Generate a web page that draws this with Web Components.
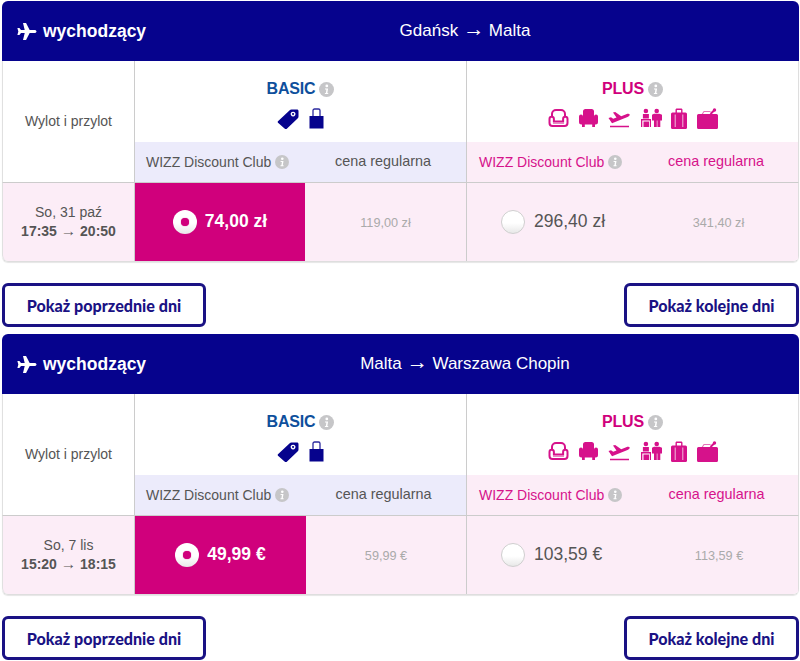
<!DOCTYPE html>
<html lang="pl">
<head>
<meta charset="utf-8">
<title>Wizz</title>
<style>
html,body{margin:0;padding:0;background:#fff;}
body{padding:1px 1px 0 2px;font-family:"Liberation Sans",Arial,sans-serif;}
</style>
</head>
<body>
<flight-section route="Gdańsk → Malta" date="So, 31 paź" time="17:35 → 20:50" basic-price="74,00 zł" basic-regular="119,00 zł" plus-price="296,40 zł" plus-regular="341,40 zł" split="170"></flight-section>
<flight-section route="Malta → Warszawa Chopin" date="So, 7 lis" time="15:20 → 18:15" basic-price="49,99 €" basic-regular="59,99 €" plus-price="103,59 €" plus-regular="113,59 €" split="171"></flight-section>

<script>
class infoIcon extends HTMLElement {
   constructor() {
      super();
      this.attachShadow({mode: 'open'});
      const size = this.getAttribute('size') || 14;
      this.shadowRoot.innerHTML = `
      <style>
         :host{display:inline-flex;width:${size}px;height:${size}px;}
         svg{display:block;}
      </style>
      <svg width="${size}" height="${size}" viewBox="0 0 14 14">
         <circle cx="7" cy="7" r="7" fill="#c6c6c8"/>
         <circle cx="7.300" cy="3.700" r="1.300" fill="#fff"/>
         <path d="M5.600 6h2.900l-.7 4.200h.8v1H5.500v-1h.9l.5-3.200H5.600z" fill="#fff"/>
      </svg>`;
   }
}
customElements.define('info-icon', infoIcon);

class fareRadio extends HTMLElement {
   constructor() {
      super();
      this.attachShadow({mode: 'open'});
      const checked = this.hasAttribute('checked');
      this.shadowRoot.innerHTML = `
      <style>
         :host{display:block;width:24px;height:24px;flex:none;}
         .r{box-sizing:border-box;width:24px;height:24px;border-radius:50%;display:flex;align-items:center;justify-content:center;
            background:linear-gradient(#fff 55%,#e8e8e8);border:${checked ? '0' : '1px solid #cfcfcf'};}
         i{width:8px;height:8px;border-radius:50%;background:#d0007c;box-shadow:0 0 1px #d0007c;display:${checked ? 'block' : 'none'};}
      </style>
      <div class="r"><i></i></div>`;
   }
}
customElements.define('fare-radio', fareRadio);

class wizzButton extends HTMLElement {
   constructor() {
      super();
      this.attachShadow({mode: 'open'});
      this.shadowRoot.innerHTML = `
      <style>
         :host{display:block;}
         button{box-sizing:border-box;display:block;height:44px;width:100%;padding:0;background:#fff;border:3px solid #1a1284;border-radius:6px;
            color:#1a1284;font:900 16.100px Lato,"Liberation Sans",sans-serif;}
      </style>
      <button><slot></slot></button>`;
   }
}
customElements.define('wizz-button', wizzButton);

class basicIcons extends HTMLElement {
   constructor() {
      super();
      this.attachShadow({mode: 'open'});
      this.shadowRoot.innerHTML = `
      <style>
         :host{display:flex;gap:10px;height:22px;color:#06038d;}
         svg{display:block;fill:currentColor;}
      </style>
      <svg width="22" height="21" viewBox="0 0 23 22"><path fill-rule="evenodd" d="M1 14 13 2.500c.6-.6 1.300-1 2.200-1H21c.8 0 1.500.7 1.500 1.500v5.800c0 .9-.4 1.600-1 2.200L10 22c-.5.300-1 .3-1.500 0L1 15.500c-.4-.4-.4-1 0-1.500zM16.800 3.800a2.500 2.500 0 1 0 .01 0zm0 1.500a1 1 0 1 1-.01 0z"/></svg>
      <svg width="15" height="21" viewBox="0 0 15 21"><path d="M.5 8h14v12.500H.5z"/><path d="M4 9V2.500A1.500 1.500 0 0 1 5.500 1h4A1.500 1.500 0 0 1 11 2.500V9" fill="none" stroke="currentColor" stroke-width="1.300" opacity=".85"/></svg>`;
   }
}
customElements.define('basic-icons', basicIcons);

class plusIcons extends HTMLElement {
   constructor() {
      super();
      this.attachShadow({mode: 'open'});
      this.shadowRoot.innerHTML = `
      <style>
         :host{display:flex;gap:10px;height:22px;color:#d6128b;}
         svg{display:block;fill:currentColor;}
         .o{fill:none;stroke:currentColor;stroke-width:2;}
         .people{margin:0 -1px 0 1px;}
      </style>
      <svg width="21" height="21" viewBox="0 0 21 21"><path class="o" d="M4 8V6a4 4 0 0 1 4-4h5a4 4 0 0 1 4 4v2"/><path class="o" d="M1.500 11a2.200 2.200 0 0 1 4.400 0v2.500h9.200V11a2.200 2.200 0 0 1 4.400 0v4a3 3 0 0 1-3 3h-12a3 3 0 0 1-3-3z"/><path d="M5 14.800h11v1.300H5z" opacity=".5"/></svg>
      <svg width="19" height="21" viewBox="0 0 19 21"><path d="M4 3.500A2.500 2.500 0 0 1 6.500 1h6A2.500 2.500 0 0 1 15 3.500V11H4z"/><path d="M0 8.500a2 2 0 0 1 4 0V11h11V8.500a2 2 0 0 1 4 0V14a2.500 2.500 0 0 1-2.500 2.500H16V19h-2.800v-2.500H5.800V19H3v-2.500h-.5A2.500 2.500 0 0 1 0 14z"/></svg>
      <svg width="22" height="21" viewBox="0 0 22 21"><path d="M.5 10 3 9.300l2.200 1.500L8.500 9.500 5 4.500l2.200-.6 6 4.400 5-2c1.500-.6 3.200-.6 3.500.2.300.8-.8 1.800-2.200 2.400L4 15.300z"/><path d="M2 17.800h19v1.500H2z"/></svg>
      <svg class="people" width="21" height="21" viewBox="0 1 21 21"><circle cx="4.900" cy="4" r="2.300"/><circle cx="15.700" cy="4" r="2.300"/><path d="M1.900 7h6v4.500h-6z"/><path d="M0 12h10v8H8.800v-6.500H1.300V20H0z"/><path d="M2.500 14.500h5.500V20H2.500z"/><path d="M13 6.700h5.500l2.500 1v5.800h-1.700V20h-2.900v-6.500h-.6V20h-2.800v-6.500H11V7.700z"/></svg>
      <svg width="16" height="21" viewBox="0 0 16 21"><path d="M4.500 5V2c0-.8.600-1.400 1.400-1.400h4.200c.8 0 1.400.6 1.400 1.400v3H10.100V2H5.900v3z"/><rect y="4.500" width="16" height="16.500" rx="1.500"/><path d="M3.600 6.500h1.300V19H3.600zM11.100 6.500h1.300V19h-1.300z" fill="#fff" opacity=".55"/></svg>
      <svg width="21" height="21" viewBox="0 0 21 21"><path d="M1.500 6h18A1.500 1.500 0 0 1 21 7.500V19.500a1.500 1.500 0 0 1-1.500 1.500h-18A1.500 1.500 0 0 1 0 19.500V7.500A1.500 1.500 0 0 1 1.500 6z"/><path d="M5 6.500 7 3.500h6.500" fill="none" stroke="currentColor" stroke-width="1.100" opacity=".6"/><path class="o" d="M13.500 6 17 2.500"/><circle cx="17.500" cy="2" r="1.700"/></svg>`;
   }
}
customElements.define('plus-icons', plusIcons);

class flightSection extends HTMLElement {
   constructor() {
      super();
      this.attachShadow({mode: 'open'});
   }
   connectedCallback() {
      this.render();
   }
   arrow(text) {
      return text.replace('→', '<span class="ar">→</span>');
   }
   getStyles() {
      const split = this.getAttribute('split');
      return `
      <style>
         :host{display:block;color:#555;font-family:"Liberation Sans",Arial,sans-serif;font-size:14px;}
         .ar{line-height:0;}
         .head{height:60px;background:#06038d;border-radius:6px 6px 0 0;color:#fff;display:grid;grid-template-columns:133px 1fr;align-items:center;}
         .title{display:flex;align-items:center;gap:6px;padding-left:15px;font-weight:bold;font-size:17.500px;white-space:nowrap;}
         .title svg{display:block;flex:none;}
         .route{font-size:17px;text-align:center;margin-left:-4px;white-space:nowrap;}
         .route .ar{font-size:1.250em;}
         .table{display:grid;grid-template-columns:133px 332px 332px;grid-template-rows:81px 41px 78px;
            border-bottom:1px solid #dedede;border-radius:0 0 6px 6px;box-shadow:0 1px 1px #e6e6e6;overflow:hidden;}
         .table>*{box-sizing:border-box;}
         .label{grid-row:1/3;border-left:1px solid #e0e0e0;border-right:1px solid #ccc;border-bottom:1px solid #ccc;
            display:flex;align-items:center;justify-content:center;font-size:14px;padding-bottom:2px;background:#fff;}
         .fare{display:flex;flex-direction:column;align-items:center;padding-top:18px;gap:9px;}
         .fare.plus{border-right:1px solid #dedede;}
         .fare.basic{border-right:1px solid #ccc;}
         .name{display:flex;align-items:center;gap:4px;font-size:16px;font-weight:bold;height:20px;letter-spacing:-.2px;}
         .basic .name{color:#0e4f9c;}
         .plus .name{color:#d0007c;}
         .sub{display:grid;align-items:center;border-bottom:1px solid #ccc;}
         .sub.b{background:#ecebfb;border-right:1px solid #ccc;grid-template-columns:${split}px 1fr;}
         .sub.p{background:#fcedf7;color:#d6128b;border-right:1px solid #dedede;grid-template-columns:${split - 1}px 1fr;}
         .dc{display:flex;align-items:center;gap:4px;padding-left:11px;white-space:nowrap;}
         .dc.pp{padding-left:12px;}
         .reg{text-align:center;padding-bottom:2px;font-size:14.400px;}
         .sub.b .reg{padding-right:5px;}
         .sub.p .reg{padding-right:2px;}
         .when{background:#fcedf7;border-left:1px solid #e0e0e0;border-right:1px solid #ccc;display:flex;flex-direction:column;align-items:center;justify-content:center;line-height:19px;border-bottom-left-radius:6px;}
         .when b{white-space:nowrap;}
         .when .ar{font-size:1.100em;font-weight:normal;}
         .prices{display:grid;grid-template-columns:${split}px 1fr;background:#fcedf7;}
         .prices.b{border-right:1px solid #ccc;}
         .prices.p{grid-template-columns:${split - 1}px 1fr;border-right:1px solid #dedede;}
         .pick{display:flex;align-items:center;justify-content:center;gap:9px;padding-bottom:1px;}
         .pick.on{background:#d0007c;color:#fff;font-weight:bold;font-size:17.500px;gap:8px;}
         .pick.off{justify-content:flex-start;padding-left:34px;color:#555;font-size:17.500px;}
         .old{display:flex;align-items:center;justify-content:center;color:#aaa;font-size:12.700px;padding-top:1px;}
         .prices.p .old{padding-left:3px;}
         .more{display:flex;justify-content:space-between;padding:21px 0 7px;}
         .more wizz-button:first-child{width:204px;}
         .more wizz-button:last-child{width:175px;}
      </style>
      `;
   }
   getTemplate() {
      const template = document.createElement('template');
      template.innerHTML = `
      <div class="head">
         <div class="title">
            <svg width="20" height="17" viewBox="0 0 21 19" preserveAspectRatio="none"><path fill="#fff" d="M20.500 9.500c0 .9-.9 1.700-2.200 1.700h-5L9.500 19H6.300l1.800-7.800H4.200l-1.700 2.200H.4l1-3.900-1-3.900h2.100l1.700 2.200h3.900L6.300 0h3.200l3.800 7.800h5c1.300 0 2.200.8 2.200 1.700z"/></svg>
            wychodzący
         </div>
         <div class="route">${this.arrow(this.getAttribute('route'))}</div>
      </div>
      <div class="table">
         <div class="label">Wylot i przylot</div>
         <div class="fare basic">
            <div class="name">BASIC <info-icon size="15"></info-icon></div>
            <basic-icons></basic-icons>
         </div>
         <div class="fare plus">
            <div class="name">PLUS <info-icon size="15"></info-icon></div>
            <plus-icons></plus-icons>
         </div>
         <div class="sub b">
            <div class="dc">WIZZ Discount Club <info-icon></info-icon></div>
            <div class="reg">cena regularna</div>
         </div>
         <div class="sub p">
            <div class="dc pp">WIZZ Discount Club <info-icon></info-icon></div>
            <div class="reg">cena regularna</div>
         </div>
         <div class="when">
            <span>${this.getAttribute('date')}</span>
            <b>${this.arrow(this.getAttribute('time'))}</b>
         </div>
         <div class="prices b">
            <div class="pick on"><fare-radio checked></fare-radio>${this.getAttribute('basic-price')}</div>
            <div class="old">${this.getAttribute('basic-regular')}</div>
         </div>
         <div class="prices p">
            <div class="pick off"><fare-radio></fare-radio>${this.getAttribute('plus-price')}</div>
            <div class="old">${this.getAttribute('plus-regular')}</div>
         </div>
      </div>
      <div class="more">
         <wizz-button>Pokaż poprzednie dni</wizz-button>
         <wizz-button>Pokaż kolejne dni</wizz-button>
      </div>
      ${this.getStyles()}
      `;
      return template;
   }
   render() {
      this.shadowRoot.appendChild(this.getTemplate().content.cloneNode(true));
   }
}
customElements.define('flight-section', flightSection);
</script>
</body>
</html>
